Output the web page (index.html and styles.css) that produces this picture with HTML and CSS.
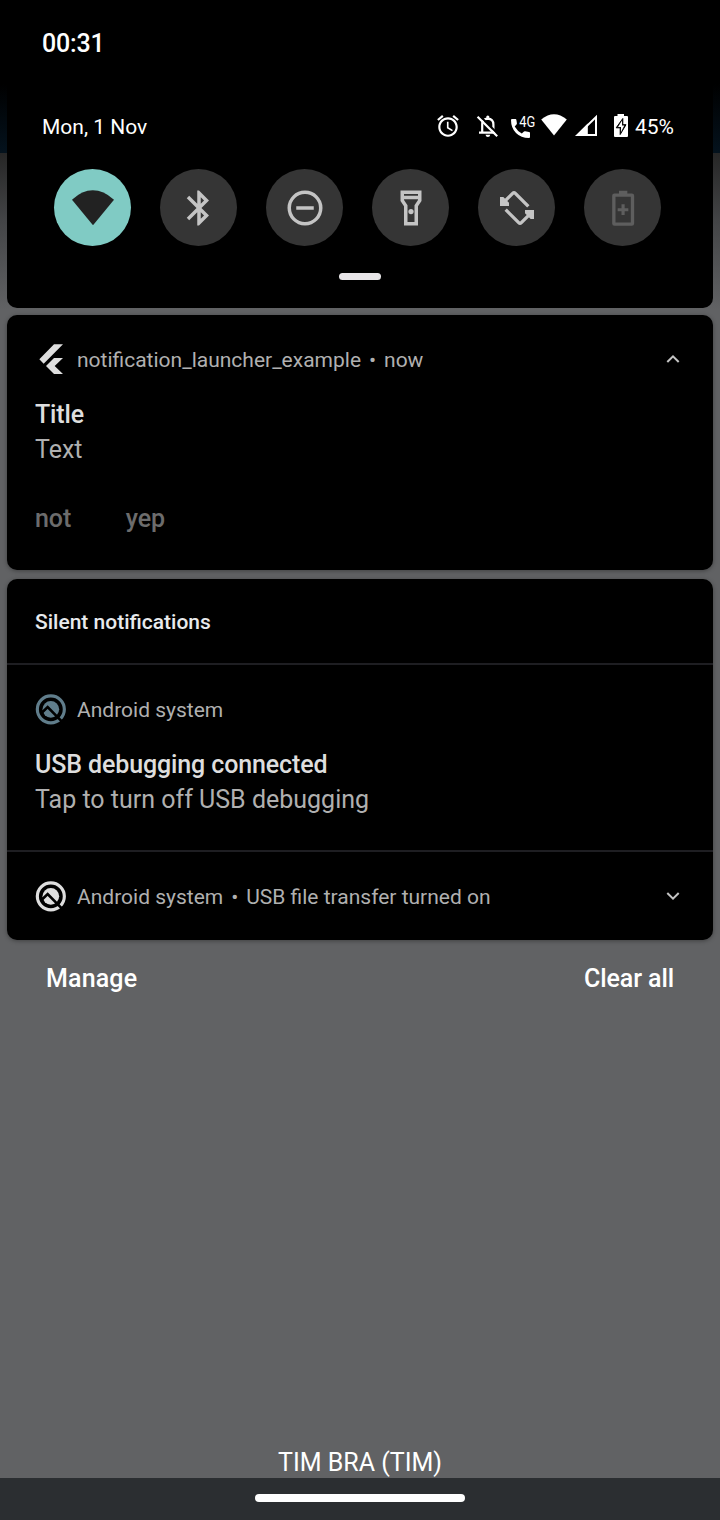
FILE: index.html
```html
<!DOCTYPE html>
<html lang="en">
<head>
<meta charset="utf-8">
<title>Notification shade</title>
<link rel="stylesheet" href="styles.css">
</head>
<body>
<svg width="0" height="0" class="defs">
  <symbol id="q-logo" viewBox="105 401 93 93">
    <circle cx="152.500" cy="447" r="40.500" fill="none" stroke="currentColor" stroke-width="9.500"/>
    <circle cx="152.500" cy="447" r="25" fill="currentColor"/>
    <path d="M122 460L143 440L186 484" fill="none" stroke="#000" stroke-width="8"/>
  </symbol>
</svg>
<div class="screen">
  <header class="quick-panel">
    <div class="clock">00:31</div>
    <div class="status">
      <span class="date">Mon, 1 Nov</span>
      <div class="status-icons">
        <svg class="alarm" viewBox="0 0 24 24"><path d="M22 5.72l-4.6-3.86-1.29 1.53 4.6 3.86L22 5.72zM7.88 3.39L6.6 1.86 2 5.71l1.29 1.53 4.59-3.85zM12.500 8H11v6l4.750 2.850.75-1.230-4-2.370V8zM12 4c-4.970 0-9 4.030-9 9s4.020 9 9 9c4.970 0 9-4.030 9-9s-4.030-9-9-9zm0 16c-3.870 0-7-3.130-7-7s3.130-7 7-7 7 3.130 7 7-3.130 7-7 7z"/></svg>
        <svg class="bell" viewBox="475 113 25 26"><path d="M482.200 132V124.500Q482.200 119 487.800 118.600Q493.400 119 493.400 124.500V132M479 132.600H495.500" fill="none" stroke="#fff" stroke-width="2.200"/><path d="M486.300 118.500V116.500Q487.800 114.500 489.300 116.500V118.500ZM485.500 134.800H490.300Q489.900 137 487.900 137Q485.900 137 485.500 134.800Z"/><path d="M479.200 115.200L499 135" stroke="#000" stroke-width="2"/><path d="M477.600 116.700L497.200 136.300" stroke="#fff" stroke-width="2.200"/></svg>
        <svg class="call" viewBox="509 113 28 26"><path d="M512 119H515.500Q516.300 119 516.400 120L516.900 123.300Q517 124 516.500 124.500L514.700 126.500Q517.300 131 521.800 133.600L524 131.500Q524.500 131 525.200 131.200L529 132Q530 132.200 530 133V137Q530 138 529 138Q521 138 516 133Q511 128 511 120Q511 119 512 119Z"/><text x="519.300" y="126.500" textLength="16" lengthAdjust="spacingAndGlyphs" class="net">4G</text></svg>
        <svg class="wifi" viewBox="540 113 28 26"><path d="M541.200 119.500Q554 109 566.800 119.500L554 135.500Z"/></svg>
        <svg class="signal" viewBox="574 113 25 26"><path d="M596 117V135H577.500Z" fill="none" stroke="#fff" stroke-width="2"/><path d="M575.500 136L587.800 123.500V136Z"/></svg>
        <svg class="battery" viewBox="612 113 18 26"><path d="M617.500 114H624V116H627Q628 116 628 117V136Q628 137 627 137H615Q614 137 614 136V117Q614 116 615 116H617.500Z"/><path d="M622.800 118.500L616.200 127.800H620.200V134.500L626 124.700H622.800Z" fill="#000" stroke="#000"/><path d="M622 120.500L618 127H621V132L624.300 125.600H622Z"/></svg>
        <span class="percent">45%</span>
      </div>
    </div>
    <div class="tiles">
      <div class="tile on"><svg viewBox="42 27 231 231"><path d="M96 119Q158 63 222 119L159 196Z"/></svg></div>
      <div class="tile"><svg class="glyph" viewBox="0 0 24 24"><path d="M17.710 7.710L12 2h-1v7.590L6.410 5 5 6.410 10.590 12 5 17.590 6.410 19 11 14.410V22h1l5.710-5.710-4.300-4.290 4.300-4.290zM13 5.830l1.880 1.880L13 9.590V5.830zm1.880 10.460L13 18.170v-3.760l1.880 1.880z"/></svg></div>
      <div class="tile"><svg class="glyph" viewBox="0 0 24 24"><path d="M7 11h10v2H7zM12 2a10 10 0 1 0 0 20a10 10 0 0 0 0-20zm0 18a8 8 0 1 1 0-16a8 8 0 0 1 0 16z"/></svg></div>
      <div class="tile"><svg class="glyph" viewBox="0 0 24 24"><path d="M18 2H6v6l2 3v11h8V11l2-3V2zm-2 2v1H8V4h8zm-2 6.400V20h-4v-9.610l-2-3V7h8v.390l-2 3.010z"/><circle cx="12" cy="14" r="1.500"/></svg></div>
      <div class="tile"><svg viewBox="354 27 231 231"><path d="M430 128L458 100Q462 96 466 100L505 139M437 149L476 188Q480 192 484 188L512 160" fill="none" stroke="#c4c4c4" stroke-width="10"/><path d="M420 111H430L447 128V138H420ZM522 177H512L495 160V150H522Z"/></svg></div>
      <div class="tile off"><svg viewBox="672 27 231 231"><rect x="761.500" y="105.500" width="56" height="87" rx="2" fill="none" stroke="#5e5e5e" stroke-width="10"/><path d="M777 92H802V102H777ZM784.500 133H794V144.500H805V154H794V165H784.500V154H773V144.500H784.500Z"/></svg></div>
    </div>
    <div class="drag-handle"></div>
  </header>

  <main class="cards">
    <article class="card launcher">
      <div class="app-row">
        <svg class="app-icon" viewBox="105 131 93 93"><path d="M162 132H189L131 190L118 177ZM162 173H189L164 197L189 221H162L138 197Z"/></svg>
        <span class="app-name">notification_launcher_example</span><span class="dot">•</span><span class="app-name">now</span>
        <svg class="chevron" viewBox="0 0 14 14"><path d="M1.300 10L7 4.300L12.700 10"/></svg>
      </div>
      <h2 class="title">Title</h2>
      <p class="body">Text</p>
      <div class="actions"><span>not</span><span>yep</span></div>
    </article>

    <section class="card silent">
      <h3 class="section-title">Silent notifications</h3>
      <article class="debug">
        <div class="app-row"><svg class="app-icon blue"><use href="#q-logo"/></svg><span class="app-name">Android system</span></div>
        <h2 class="title">USB debugging connected</h2>
        <p class="body">Tap to turn off USB debugging</p>
      </article>
      <article class="transfer">
        <div class="app-row">
          <svg class="app-icon"><use href="#q-logo"/></svg><span class="app-name">Android system</span><span class="dot">•</span><span class="app-name">USB file transfer turned on</span>
          <svg class="chevron" viewBox="0 0 14 14"><path d="M1.300 4L7 9.700L12.700 4"/></svg>
        </div>
      </article>
    </section>
  </main>

  <div class="footer-actions"><span class="manage">Manage</span><span class="clear">Clear all</span></div>
  <div class="carrier">TIM BRA (TIM)</div>
  <nav class="nav-bar"><div class="home-pill"></div></nav>
</div>
</body>
</html>
```
FILE: styles.css
```css
* { box-sizing: border-box; }
body, h2, h3, p { margin: 0; }
svg { display: block; flex: none; fill: currentColor; }
.defs { position: absolute; }
.screen {
  width: 720px;
  height: 1520px;
  display: flex;
  flex-direction: column;
  font-family: Roboto, "Liberation Sans", sans-serif;
  color: #fff;
  background:
    linear-gradient(#000 84px, #04121d 153px, transparent 153px),
    linear-gradient(#262626 153px, #434446 220px, #616264 310px);
}
.quick-panel {
  height: 308px;
  margin: 0 7px;
  padding: 29px 35px 0;
  background: #000;
  border-radius: 0 0 10px 10px;
}
.clock { font-size: 25px; font-weight: 500; line-height: 30px; height: 84px; letter-spacing: -.2px; }
.status { display: flex; height: 26px; line-height: 28px; font-size: 21px; justify-content: space-between; }
.status-icons { display: flex; margin-right: 4px; }
.status-icons svg { height: 26px; }
.alarm { width: 26px; margin-right: 14px; }
.bell { width: 25px; margin-right: 9px; }
.call { width: 28px; margin-right: 3px; }
.wifi { width: 28px; margin-right: 6px; }
.signal { width: 25px; margin-right: 13px; }
.battery { width: 18px; margin-right: 5px; }
.net { font-size: 15px; }
.percent { width: 39px; white-space: nowrap; }
.tiles { display: flex; gap: 29px; margin: 30px 0 0 12px; }
.tile {
  width: 77px;
  height: 77px;
  border-radius: 50%;
  display: flex;
  flex: none;
  align-items: center;
  justify-content: center;
  background: #353535;
  color: #c4c4c4;
}
.tile svg { width: 77px; height: 77px; }
.tile .glyph { width: 42px; height: 42px; }
.tile.on { background: #80cbc4; color: #222; }
.tile.off { color: #5e5e5e; }
.drag-handle { width: 42px; height: 7px; border-radius: 3.500px; background: #e8e6e8; margin: 27px auto 0; }
.cards { display: flex; flex-direction: column; gap: 9px; margin: 7px 7px 0; }
.card { background: #000; border-radius: 10px; box-shadow: 0 1px 4px rgba(0, 0, 0, .35); }
.launcher { height: 255px; padding: 28px 28px 0; }
.app-row { display: flex; align-items: center; height: 32px; font-size: 21px; color: #b0b0b0; white-space: nowrap; }
.app-name, .dot { padding-top: 2px; }
.app-icon { width: 31px; height: 31px; margin-right: 11px; color: #dedede; }
.app-icon.blue { color: #607d8b; }
.dot { width: 23px; text-align: center; }
.chevron { width: 14px; height: 14px; margin-left: auto; margin-right: 5.500px; fill: none; stroke: #c4c4c4; stroke-width: 2; }
.title { font-size: 25px; font-weight: 500; line-height: 34px; margin-top: 23px; color: #dedede; letter-spacing: -.12px; }
.body { font-size: 25px; line-height: 36px; color: #b0b0b0; }
.actions { display: flex; gap: 54.500px; margin-top: 33px; font-size: 25px; font-weight: 500; line-height: 36px; color: #6c6c6c; letter-spacing: -.1px; }
.silent { height: 361px; }
.section-title { height: 86px; padding-left: 28px; border-bottom: 2px solid #1e1e22; font-size: 21px; font-weight: 500; line-height: 86px; color: #e8eaed; }
.debug { height: 187px; padding: 28px 28px 0; border-bottom: 2px solid #1e1e22; }
.transfer { padding: 28px 28px 0; }
.footer-actions { display: flex; justify-content: space-between; padding: 22px 46px 0; font-size: 25px; font-weight: 500; line-height: 34px; }
.manage { letter-spacing: .15px; }
.clear { letter-spacing: -.1px; }
.carrier { margin-top: auto; height: 31px; line-height: 32px; text-align: center; font-size: 25px; }
.nav-bar { height: 42px; padding-top: 16px; background: #2b2e31; }
.home-pill { width: 210px; height: 8px; margin: 0 auto; border-radius: 4px; background: #fff; }
```
